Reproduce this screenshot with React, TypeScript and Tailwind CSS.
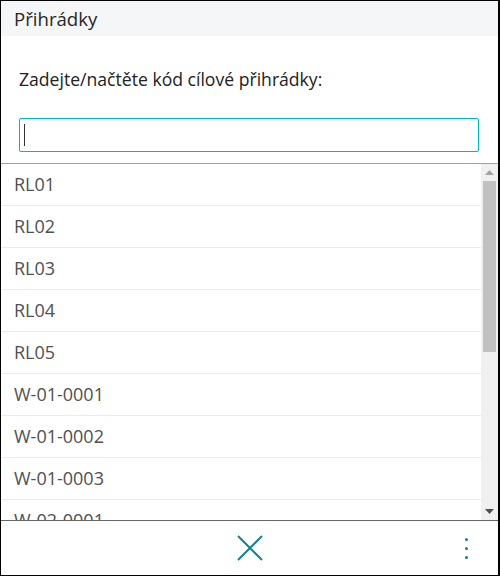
import React from 'react';

const bins = ['RL01', 'RL02', 'RL03', 'RL04', 'RL05', 'W-01-0001', 'W-01-0002', 'W-01-0003', 'W-02-0001'];

function Scrollbar() {
  return (
    <div className="flex w-[17px] shrink-0 flex-col items-center bg-[#f0f0f0]">
      <div className="flex h-[17px] w-full items-center justify-center">
        <svg width="9" height="5" viewBox="0 0 9 5"><path d="M4.5 0 L9 5 L0 5 Z" fill="#a3a3a3" /></svg>
      </div>
      <div className="h-[171px] w-[13px] bg-[#c1c1c1]" />
      <div className="flex-1" />
      <div className="flex h-[17px] w-full items-center justify-center">
        <svg width="9" height="5" viewBox="0 0 9 5"><path d="M0 0 L9 0 L4.5 5 Z" fill="#505050" /></svg>
      </div>
    </div>
  );
}

export default function App() {
  return (
    <div
      className="flex h-[576px] w-[500px] flex-col border border-r-2 border-black bg-white"
      style={{ fontFamily: '"Open Sans", "Noto Sans", sans-serif' }}
    >
      <div className="flex h-[35px] shrink-0 items-center bg-[#f5f6f8] px-[13px] text-[18.6px] text-[#262626]">
        Přihrádky
      </div>

      <div className="flex shrink-0 flex-col px-[18px]">
        <div className="mt-[30px] text-[17.6px] leading-[26px] text-[#212121]">Zadejte/načtěte kód cílové přihrádky:</div>
        <div className="mt-[26px] mr-[1px] flex h-[34px] items-center rounded-[2px] border border-[#00b7c3] px-[4px]">
          <div className="h-[22px] w-px bg-[#333]" />
        </div>
      </div>

      <div className="mt-[11px] flex min-h-0 flex-1 border-t border-b border-t-[#a0a0a0] border-b-[#666]">
        <div className="flex min-w-0 flex-1 flex-col overflow-hidden">
          {bins.map(b => (
            <div key={b} className="flex h-[42px] shrink-0 items-center border-b border-[#ebebeb] px-[13px] text-[18px] text-[#505050]">
              {b}
            </div>
          ))}
        </div>
        <Scrollbar />
      </div>

      <div className="relative flex h-[54px] shrink-0 items-center justify-center">
        <svg width="28" height="28" viewBox="0 0 28 28">
          <path d="M2 2 L26 26 M26 2 L2 26" stroke="#12838b" strokeWidth="2" fill="none" />
        </svg>
        <div className="absolute right-[30px] top-[17px] flex flex-col gap-[6px]">
          <div className="h-[3px] w-[3px] rounded-full bg-[#12838b]" />
          <div className="h-[3px] w-[3px] rounded-full bg-[#12838b]" />
          <div className="h-[3px] w-[3px] rounded-full bg-[#12838b]" />
        </div>
      </div>
    </div>
  );
}
